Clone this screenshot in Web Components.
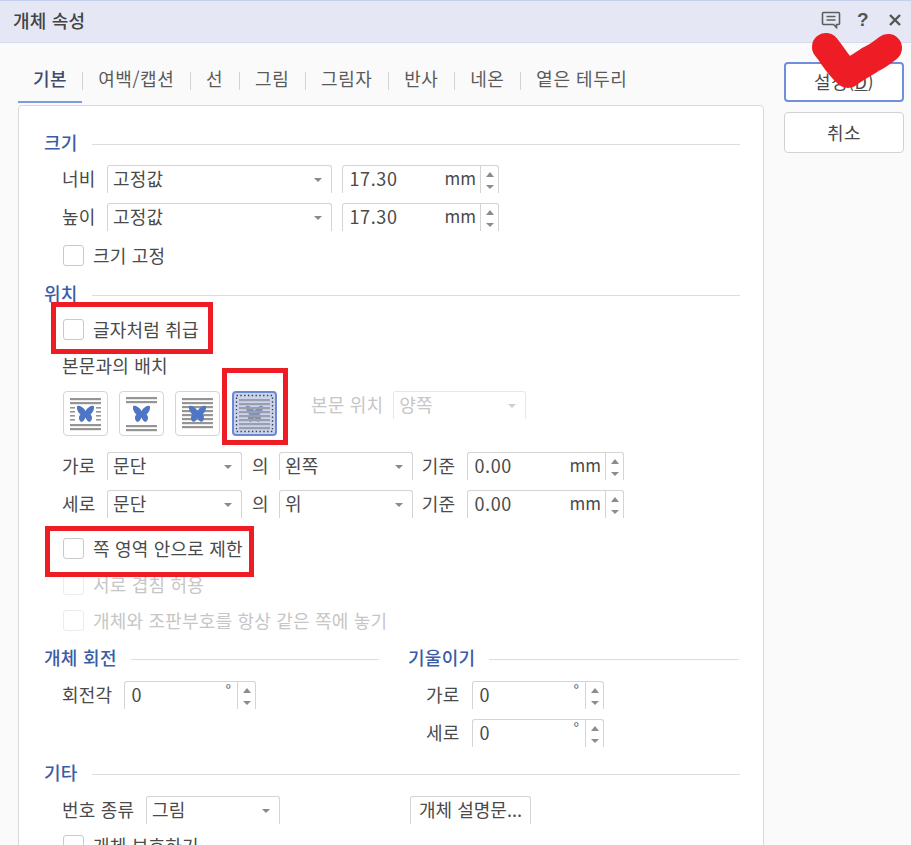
<!DOCTYPE html>
<html lang="ko">
<head>
<meta charset="utf-8">
<title>개체 속성</title>
<style>
html,body{margin:0;padding:0;background:#fafafa;overflow:hidden}
body{width:911px;height:845px;font:18px/20px "Noto Sans CJK KR","Noto Sans",sans-serif;color:#4a4a4a;letter-spacing:.2px}
</style>
</head>
<body>
<x-dialog>
  <x-titlebar slot="title">개체 속성</x-titlebar>
  <x-tabs slot="tabs"></x-tabs>
  <x-panel slot="panel">
    <x-heading>크기</x-heading>
    <x-row style="margin-top:12px"><x-label w="45">너비</x-label><x-select w="225">고정값</x-select><x-spin w="157" style="margin-left:10px" val="17.30" unit="mm"></x-spin></x-row>
    <x-row style="margin-top:10px"><x-label w="45">높이</x-label><x-select w="225">고정값</x-select><x-spin w="157" style="margin-left:10px" val="17.30" unit="mm"></x-spin></x-row>
    <x-check style="margin-top:13px">크기 고정</x-check>

    <x-heading style="margin-top:18px">위치</x-heading>
    <x-check style="margin-top:14px">글자처럼 취급</x-check>
    <x-row style="margin-top:16px;height:20px"><x-label>본문과의 배치</x-label></x-row>
    <x-wrapbar style="margin-top:15px"></x-wrapbar>
    <x-row style="margin-top:16px"><x-label w="45">가로</x-label><x-select w="135">문단</x-select><x-label w="37" center>의</x-label><x-select w="134">왼쪽</x-select><x-label w="54" center style="padding-right:3px;box-sizing:border-box">기준</x-label><x-spin w="157" val="0.00" unit="mm"></x-spin></x-row>
    <x-row style="margin-top:10px"><x-label w="45">세로</x-label><x-select w="135">문단</x-select><x-label w="37" center>의</x-label><x-select w="134">위</x-select><x-label w="54" center style="padding-right:3px;box-sizing:border-box">기준</x-label><x-spin w="157" val="0.00" unit="mm"></x-spin></x-row>
    <x-check style="margin-top:19px">쪽 영역 안으로 제한</x-check>
    <x-check disabled style="margin-top:14px">서로 겹침 허용</x-check>
    <x-check disabled style="margin-top:14px">개체와 조판부호를 항상 같은 쪽에 놓기</x-check>

    <x-columns style="margin-top:17px">
      <x-col>
        <x-heading>개체 회전</x-heading>
        <x-row style="margin-top:13px"><x-label w="62">회전각</x-label><x-spin w="132" val="0" unit="°" sup></x-spin></x-row>
      </x-col>
      <x-col>
        <x-heading>기울이기</x-heading>
        <x-row style="margin-top:13px;padding-left:18px"><x-label w="46">가로</x-label><x-spin w="132" val="0" unit="°" sup></x-spin></x-row>
        <x-row style="margin-top:10px;padding-left:18px"><x-label w="46">세로</x-label><x-spin w="132" val="0" unit="°" sup></x-spin></x-row>
      </x-col>
    </x-columns>

    <x-heading style="margin-top:17px">기타</x-heading>
    <x-row style="margin-top:13px"><x-label w="84">번호 종류</x-label><x-select w="134">그림</x-select><x-push w="130"></x-push><x-open w="121">개체 설명문...</x-open></x-row>
    <x-check style="margin-top:10px">개체 보호하기</x-check>
  </x-panel>
  <x-side slot="side">
    <x-button primary>설정(<u>D</u>)</x-button>
    <x-button>취소</x-button>
  </x-side>
  <x-marks slot="marks"></x-marks>
</x-dialog>

<script>
function def(name, css, html, init) {
  customElements.define(name, class extends HTMLElement {
    constructor() {
      super();
      const r = this.attachShadow({mode:'open'});
      r.innerHTML = '<style>' + css + '</style>' + (typeof html === 'function' ? html(this) : html);
    }
    connectedCallback() { if (init) init(this); }
  });
}

def('x-dialog', `
  :host{display:block;position:relative;width:911px;height:845px;overflow:hidden;background:#fafafa}
  .main{display:flex;padding-left:18px}
  .left{width:746px;flex:none}
  .right{margin-left:20px;width:120px;padding-top:19px;flex:none}
`, `<slot name="title"></slot>
  <div class="main">
    <div class="left"><slot name="tabs"></slot><slot name="panel"></slot></div>
    <div class="right"><slot name="side"></slot></div>
  </div><slot name="marks"></slot>`);

def('x-titlebar', `
  :host{display:flex;align-items:center;box-sizing:border-box;height:43px;padding:0 0 4px 13px;background:#e5e8f4;border-top:1px solid #c4cfec;border-bottom:1px solid #d6daea;font-weight:500;color:#444}
  .t{flex:1}
  .ic{display:flex;align-items:center;justify-content:center;width:32px;height:26px}
  .q{font-family:"Liberation Sans",sans-serif;font-weight:700;font-size:19px;color:#555}
`, `<div class="t"><slot></slot></div>
  <div class="ic"><svg width="20" height="18" viewBox="0 0 20 18" fill="none" stroke="#5d5d5d" stroke-width="1.6"><path d="M2.5 1.5h15a1 1 0 0 1 1 1v10a1 1 0 0 1-1 1h-2v3l-3-3h-10a1 1 0 0 1-1-1v-10a1 1 0 0 1 1-1z"/><path d="M5.5 5.5h9M5.5 9h9"/></svg></div>
  <div class="ic q">?</div>
  <div class="ic"><svg width="14" height="14" viewBox="0 0 14 14" stroke="#555" stroke-width="2.4"><path d="M2 2l10 10M12 2L2 12"/></svg></div>`);

def('x-tabs', `
  :host{display:flex;align-items:stretch;height:45px;margin-top:17px;box-sizing:border-box;color:#5a5a5a;letter-spacing:.55px}
  .tab{display:flex;align-items:center;padding:0 15.8px 7px 15px;height:43px;box-sizing:border-box;white-space:nowrap}
  .tab.on{color:#404a70;font-weight:500;border-bottom:2px solid #7d9be0;padding-bottom:5px;padding-right:15px}
  .sep{width:1px;height:18px;margin-top:12px;background:#d4d4d4;flex:none}
`, `<div class="tab on">기본</div><div class="sep"></div><div class="tab">여백/캡션</div><div class="sep"></div><div class="tab">선</div><div class="sep"></div><div class="tab">그림</div><div class="sep"></div><div class="tab">그림자</div><div class="sep"></div><div class="tab">반사</div><div class="sep"></div><div class="tab">네온</div><div class="sep"></div><div class="tab">옅은 테두리</div>`);

def('x-panel', `
  :host{display:block;box-sizing:border-box;width:746px;height:760px;background:#fff;border:1px solid #d9d9d9;border-radius:4px;padding:27px 23px 0 25px}
`, `<slot></slot>`);

def('x-heading', `
  :host{display:flex;align-items:center;height:20px;color:#3b5ca6;font-weight:500;font-size:18px;letter-spacing:.3px;white-space:nowrap}
  span{margin-top:-2px}
  i{flex:1;height:1px;background:#dcdcdc;margin:2px 0 0 14px}
`, `<span><slot></slot></span><i></i>`);

def('x-row', `:host{display:flex;align-items:center;height:28px;padding-left:18px}`, `<slot></slot>`);

def('x-label', `
  :host{display:block;flex:none;white-space:nowrap;line-height:20px;padding-bottom:2px}
`, `<slot></slot>`, el => {
  if (el.hasAttribute('w')) el.style.width = el.getAttribute('w') + 'px';
  if (el.hasAttribute('center')) el.style.textAlign = 'center';
});

def('x-select', `
  :host{display:flex;align-items:center;flex:none;box-sizing:border-box;height:28px;padding:0 9px 4px 5px;background:#fff;border:1px solid #d4d4d4;border-bottom:0;border-radius:3px 3px 0 0;white-space:nowrap}
  span{flex:1}
  i{width:0;height:0;border:4px solid transparent;border-top:4px solid #8a8a8a;border-bottom:0;margin-top:4px}
`, `<span><slot></slot></span><i></i>`, el => {
  el.style.width = el.getAttribute('w') + 'px';
});

def('x-spin', `
  :host{display:flex;align-items:stretch;flex:none;box-sizing:border-box;height:28px;background:#fff;border:1px solid #d4d4d4;border-bottom:0;border-radius:3px 3px 0 0;white-space:nowrap}
  .val{flex:1;padding:0 0 4px 6.5px;display:flex;align-items:center;letter-spacing:.6px}
  .unit{padding:0 4px 4px 0;display:flex;align-items:center;font-size:17px;letter-spacing:0}
  .unit.sup{align-items:flex-start;padding:0 6px 0 0;font-size:15px;line-height:16px;color:#666}
  .arr{width:17px;border-left:1px solid #d4d4d4;display:flex;flex-direction:column;align-items:center;justify-content:space-between;padding:6px 0 4px}
  .u{width:0;height:0;border:4px solid transparent;border-bottom:5px solid #8c8c8c;border-top:0}
  .d{width:0;height:0;border:4px solid transparent;border-top:4px solid #8c8c8c;border-bottom:0}
`, el => `<div class="val">${el.getAttribute('val')}</div><div class="unit ${el.hasAttribute('sup')?'sup':''}">${el.getAttribute('unit')}</div><div class="arr"><i class="u"></i><i class="d"></i></div>`,
  el => { el.style.width = el.getAttribute('w') + 'px'; });

def('x-check', `
  :host{display:flex;align-items:center;height:22px;padding-left:19px;white-space:nowrap}
  i{flex:none;box-sizing:border-box;width:21px;height:21px;margin-right:9px;background:#fff;border:1px solid #c9c9c9;border-radius:3px}
  span{margin-top:-1px}
  :host([disabled]){color:#c6c6c6}
  :host([disabled]) i{border-color:#ececec}
`, `<i></i><span><slot></slot></span>`);

def('x-wrapbar', `
  :host{display:flex;align-items:flex-start;padding-left:19px;height:45px}
  .gap{display:flex;gap:11px}
  .gap x-wrapicon:last-child{margin-left:1px}
  .pos{display:flex;align-items:center;margin-left:34px;color:#c6c6c6;height:28px;white-space:nowrap}
  .lab{margin-top:-2px}
  .sel{margin-left:10px;box-sizing:border-box;width:133px;height:28px;border:1px solid #e8e8e8;border-bottom:0;border-radius:3px 3px 0 0;display:flex;align-items:center;padding:0 9px 4px 5px}
  .sel span{flex:1}
  .sel i{width:0;height:0;border:4px solid transparent;border-top:4px solid #cfcfcf;border-bottom:0;margin-top:4px}
`, `<div class="gap">
    <x-wrapicon kind="square"></x-wrapicon>
    <x-wrapicon kind="topbottom"></x-wrapicon>
    <x-wrapicon kind="front"></x-wrapicon>
    <x-wrapicon kind="behind"></x-wrapicon>
  </div>
  <div class="pos"><span class="lab">본문 위치</span><div class="sel"><span>양쪽</span><i></i></div></div>`);

const BF = 'M22.5 20C20.5 16 15.5 13.8 14.2 15.2C13.2 17 15 22 17.6 23.4C15.4 24.6 15.6 29 17.6 30.4C19.6 31.4 21.6 29 22.5 26.4C23.4 29 25.4 31.4 27.4 30.4C29.4 29 29.6 24.6 27.4 23.4C30 22 31.8 17 30.8 15.2C29.5 13.8 24.5 16 22.5 20Z';
function hl(x1, x2, y, h, c) { return `<rect x="${x1}" y="${y}" width="${x2-x1}" height="${h}" fill="${c}"/>`; }
const G = '#959595';
const ICONS = {
  square: () => {
    let s = hl(7,38,7,2.2,G)+hl(7,38,11,2.2,G)+hl(7,38,33,2.2,G)+hl(7,38,37,2.2,G);
    for (const y of [16,20,24,28]) s += hl(7,12,y,1.6,G)+hl(33,38,y,1.6,G);
    return s + `<path d="${BF}" fill="#4f76c4"/>`;
  },
  topbottom: () => hl(7,38,6,2.2,G)+hl(7,38,10,2.2,G)+hl(7,38,34,2.2,G)+hl(7,38,38,2.2,G)+`<path d="${BF}" fill="#4f76c4"/>`,
  front: () => {
    let s = '';
    for (const y of [7,11,15,19,23,27,31,35]) s += hl(7,38,y,2.2,G);
    return s + `<path d="${BF}" fill="#4f76c4"/>`;
  },
  behind: () => {
    let s = `<path d="${BF}" fill="#7f8fb8"/>`;
    for (const y of [8,12,16,20,24,28,32,36]) s += hl(7,38,y,2.2,'#9a9fae');
    return s;
  }
};
def('x-wrapicon', `
  :host{display:block;flex:none;box-sizing:border-box;width:45px;height:45px;background:#fff;border:1px solid #d4d4d4;border-radius:4px;overflow:hidden}
  :host([kind=behind]){background:#ccd3ea;border:2px solid #6a8ad8}
  svg{display:block;margin:-1px}
  :host([kind=behind]) svg{margin:-2px}
`, el => {
  const k = el.getAttribute('kind');
  const dots = k === 'behind' ? '<rect x="4.5" y="4.5" width="36" height="36" fill="none" stroke="#333a55" stroke-width="1.3" stroke-dasharray="1.4 2.4"/>' : '';
  return `<svg width="45" height="45" viewBox="0 0 45 45">${ICONS[k]()}${dots}</svg>`;
});

def('x-columns', `:host{display:grid;grid-template-columns:335px 331px;column-gap:29px}`, `<slot></slot>`);
def('x-col', `:host{display:block;height:98px}`, `<slot></slot>`);
def('x-push', `:host{display:block;flex:none}`, ``, el => { el.style.width = el.getAttribute('w') + 'px'; });

def('x-open', `
  :host{display:flex;align-items:center;justify-content:center;flex:none;box-sizing:border-box;height:28px;padding-bottom:4px;background:#fff;border:1px solid #d4d4d4;border-bottom:0;border-radius:3px 3px 0 0;white-space:nowrap;font-size:18px;letter-spacing:0}
`, `<slot></slot>`, el => { el.style.width = el.getAttribute('w') + 'px'; });

def('x-side', `:host{display:flex;flex-direction:column;gap:10px;width:120px}`, `<slot></slot>`);
def('x-button', `
  :host{display:flex;align-items:center;justify-content:center;box-sizing:border-box;height:41px;padding-bottom:2px;background:#fff;border:1px solid #d2d2d2;border-radius:4px;color:#4a4a4a;white-space:nowrap;letter-spacing:.5px}
  :host([primary]){border:2px solid #6f8fdc;height:40px}
`, `<slot></slot>`);

def('x-marks', `
  .box{position:absolute;box-sizing:border-box;border:5px solid #ee1c25;pointer-events:none}
  svg{position:absolute;left:0;top:0;pointer-events:none}
`, `<div class="box" style="left:51px;top:302px;width:162px;height:52px"></div>
  <div class="box" style="left:222px;top:368px;width:66px;height:77px"></div>
  <div class="box" style="left:45px;top:526px;width:209px;height:51px"></div>
  <svg width="911" height="120" viewBox="0 0 911 120"><path d="M826 47C832 54 838 66 848 74C856 68 864 64 871 59C878 56 883 52 888 48" fill="none" stroke="#ee1c25" stroke-width="28" stroke-linecap="round" stroke-linejoin="round"/></svg>`);
</script>
</body>
</html>
